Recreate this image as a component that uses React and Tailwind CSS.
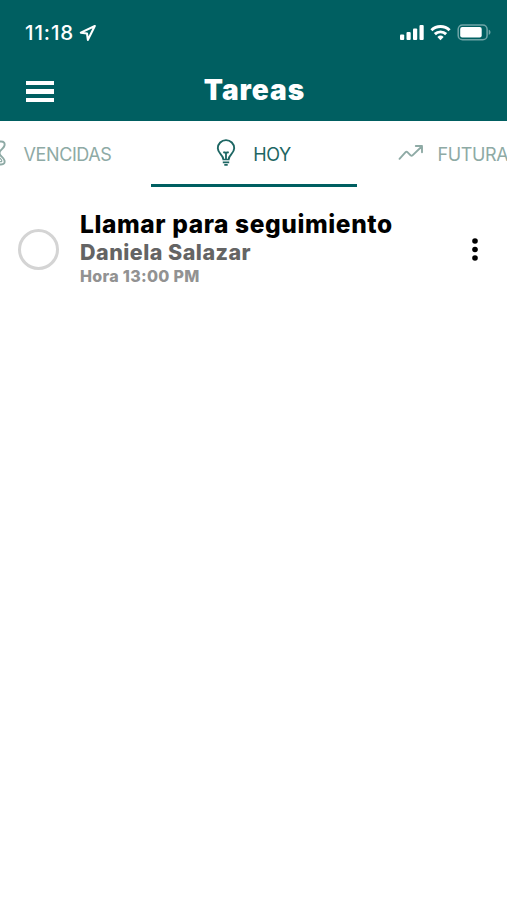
import { useState } from 'react'

const TASKS = [
  { id: 1, title: 'Llamar para seguimiento', client: 'Daniela Salazar', time: 'Hora 13:00 PM' },
]

function StatusBar() {
  return (
    <div className="flex h-[65px] items-center justify-between pl-[25px] pr-[15px]">
      <div className="flex items-center gap-[5px]">
        <span className="text-[20.5px] font-medium leading-6 tracking-[0.9px]">11:18</span>
        <svg className="h-[18px] w-[18px]" viewBox="0 0 18 18" fill="none" stroke="currentColor" strokeWidth="2.1" strokeLinejoin="round">
          <path d="M15.8 2 1.8 8.6l6.2.9.9 6.4z" />
        </svg>
      </div>
      <div className="flex items-center">
        <svg className="h-4 w-6" viewBox="0 0 24 16" fill="currentColor">
          <rect x="0" y="9.5" width="4.2" height="5.5" rx="1" />
          <rect x="6.5" y="7" width="4.2" height="8" rx="1" />
          <rect x="13" y="3.5" width="4.2" height="11.5" rx="1" />
          <rect x="19.500" y="0" width="4.2" height="15" rx="1" />
        </svg>
        <svg className="ml-[6px] h-4 w-[21px]" viewBox="0 0 22 16" fill="none" stroke="currentColor" strokeWidth="3.1">
          <path d="M1.5 5.1a13.6 13.6 0 0 1 19 0" />
          <path d="M5.1 9.2a8.5 8.5 0 0 1 11.8 0" />
          <path d="M11 15.5 7.7 12.3a4.8 4.8 0 0 1 6.6 0z" fill="currentColor" stroke="none" />
        </svg>
        <svg className="ml-[6px] h-[17px] w-[35px]" viewBox="0 0 35 17" fill="none">
          <rect x="1.2" y="0.9" width="28.9" height="14.8" rx="4.3" stroke="#6fa5a7" strokeWidth="1.5" />
          <rect x="3.2" y="3" width="21.5" height="10.6" rx="2" fill="currentColor" />
          <path d="M31.7 5.8c2.4.6 2.4 4.4 0 5z" fill="#6fa5a7" />
        </svg>
      </div>
    </div>
  )
}

function HourglassIcon() {
  return (
    <svg className="h-[26px] w-[22px]" viewBox="0 0 22 26" fill="none" stroke="currentColor" strokeWidth="1.9" strokeLinejoin="round">
      <path d="M5 1.500h12c3 0 4 1.500 3.500 4-.6 3-5 4.500-5 7.500s4.400 4.500 5 7.500c.5 2.500-.5 4-3.500 4H5c-3 0-4-1.500-3.500-4 .6-3 5-4.500 5-7.500s-4.400-4.500-5-7.500c-.5-2.500.5-4 3.500-4z" />
      <path d="M17.600 21.600c.8-2-1.600-3.600-3.600-4.600q-3-1.500-6 0c-2 1-4.400 2.600-3.600 4.600z" strokeWidth="1.200" />
    </svg>
  )
}

function BulbIcon() {
  return (
    <svg className="h-[28px] w-5" viewBox="0 0 20 28" fill="none" stroke="currentColor" strokeWidth="1.9">
      <path d="M7.2 20c0-4-5.400-5.500-5.400-10.700a8.200 8.200 0 0 1 16.400 0c0 5.200-5.400 6.700-5.400 10.700" />
      <path d="M10 20v-6.600M7.3 13.2q2.700 1 5.400 0" strokeWidth="1.8" />
      <path d="M6.4 20.500h7.200M6.8 23.400h6.400M8.300 25.900h3.400" strokeWidth="1.7" />
    </svg>
  )
}

function TrendIcon() {
  return (
    <svg className="h-[18px] w-[26px]" viewBox="0 0 26 18" fill="none" stroke="currentColor" strokeWidth="1.9" strokeLinecap="round" strokeLinejoin="round">
      <path d="M1.5 14.800 7.600 8.200q.9-.9 1.800 0l3.200 3.200q1 .9 1.900 0L24 2.200M17.800 2H24v6.200" />
    </svg>
  )
}

function Header() {
  return (
    <header className="h-[121px] bg-[#005f61] text-white">
      <StatusBar />
      <div className="grid h-[50px] grid-cols-[1fr_auto_1fr] items-center pl-[26px] pr-[24px]">
        <button aria-label="Menú" className="flex w-[28px] flex-col gap-[4px] pt-[3px]">
          <span className="h-[4.5px] w-full bg-white" />
          <span className="h-[4.5px] w-full bg-white" />
          <span className="h-[4.5px] w-full bg-white" />
        </button>
        <h1 className="text-[28px] font-black leading-8 tracking-[1px]">Tareas</h1>
      </div>
    </header>
  )
}

function Tab({ icon, label, active, onClick }) {
  return (
    <button
      onClick={onClick}
      className={`flex h-[66px] w-[206px] shrink-0 items-center justify-center border-b-[3px] text-[18px] tracking-[-0.4px]
        ${active ? 'border-[#005f61] text-[#1d6663]' : 'border-transparent text-[#8eaaa5]'}`}
    >
      {icon}
      <span className="pt-[4px]">{label}</span>
    </button>
  )
}

function TaskRow({ task }) {
  const [done, setDone] = useState(false)

  return (
    <li className="flex items-center pl-[18px] pr-[29px]">
      <button
        aria-label="Completar"
        onClick={() => setDone(!done)}
        className={`mt-[2px] h-[41px] w-[41px] shrink-0 rounded-full border-3 border-[#d4d4d4] ${done ? 'bg-[#005f61]' : ''}`}
      />
      <div className="ml-[21px] flex-1 whitespace-nowrap">
        <p className="text-[24.5px] font-extrabold leading-[30px] tracking-[0.6px] text-black">{task.title}</p>
        <p className="text-[21.5px] font-extrabold leading-[27px] tracking-[0.47px] text-[#646464]">{task.client}</p>
        <p className="text-[16px] font-extrabold leading-[21px] tracking-[0.32px] text-[#929292]">{task.time}</p>
      </div>
      <button aria-label="Opciones" className="mt-[3px]">
        <svg className="h-[23px] w-[6px]" viewBox="0 0 6 23" fill="currentColor">
          <circle cx="3" cy="3" r="2.8" />
          <circle cx="3" cy="11.5" r="2.8" />
          <circle cx="3" cy="20" r="2.8" />
        </svg>
      </button>
    </li>
  )
}

export default function App() {
  const [tab, setTab] = useState('hoy')

  return (
    <div className="h-[900px] w-[507px] overflow-hidden bg-white font-['Inter',sans-serif]">
      <Header />

      {/* Tabs run past both edges of the screen */}
      <nav className="flex justify-center overflow-hidden">
        <Tab
          icon={<span className="mr-[18px]"><HourglassIcon /></span>}
          label="VENCIDAS"
          active={tab === 'vencidas'}
          onClick={() => setTab('vencidas')}
        />
        <Tab
          icon={<span className="mr-[17px]"><BulbIcon /></span>}
          label="HOY"
          active={tab === 'hoy'}
          onClick={() => setTab('hoy')}
        />
        <Tab
          icon={<span className="mr-[14px]"><TrendIcon /></span>}
          label={<span className="mr-[2px]">FUTURAS</span>}
          active={tab === 'futuras'}
          onClick={() => setTab('futuras')}
        />
      </nav>

      <ul className="pt-[22px]">
        {TASKS.map((task) => (
          <TaskRow key={task.id} task={task} />
        ))}
      </ul>
    </div>
  )
}
